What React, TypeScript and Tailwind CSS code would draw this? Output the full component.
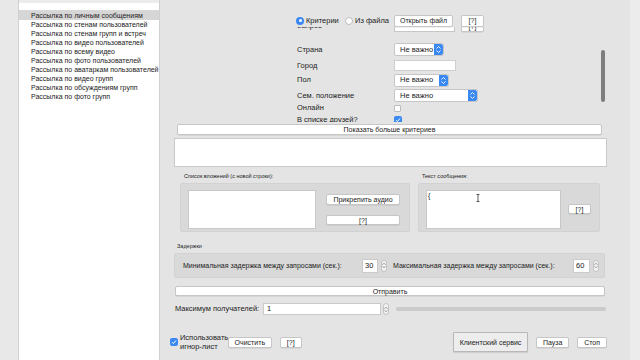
import React from "react";

function Btn({ children, className = "" }: { children?: React.ReactNode; className?: string }) {
  return (
    <div
      className={`flex items-center justify-center bg-white border border-[#c6c6c6] rounded-[2px] text-[7px] leading-none text-[#222] whitespace-nowrap shadow-[0_0.5px_0.5px_rgba(0,0,0,0.12)] ${className}`}
    >
      {children}
    </div>
  );
}

function Select({ className = "" }: { className?: string }) {
  return (
    <div className={`flex items-stretch bg-white border border-[#c6c6c6] rounded-[2px] h-[13px] ${className}`}>
      <div className="flex-1 flex items-center pl-[5px] text-[7.5px] leading-none text-[#222] whitespace-nowrap overflow-hidden">Не важно</div>
      <div className="w-[9px] shrink-0 bg-[#3a89f3] rounded-r-[2px] flex flex-col items-center justify-center gap-[1px]">
        <svg width="5" height="3" viewBox="0 0 5 3"><path d="M0.5 2.5 L2.5 0.5 L4.5 2.5" stroke="white" strokeWidth="0.9" fill="none" /></svg>
        <svg width="5" height="3" viewBox="0 0 5 3"><path d="M0.5 0.5 L2.5 2.5 L4.5 0.5" stroke="white" strokeWidth="0.9" fill="none" /></svg>
      </div>
    </div>
  );
}

function Stepper() {
  return (
    <div className="w-[6px] h-[12px] border border-[#c2c2c2] rounded-[3px] bg-[#f4f4f4] flex flex-col items-center justify-center gap-[1px]">
      <svg width="4" height="2" viewBox="0 0 4 2"><path d="M0.3 1.8 L2 0.3 L3.7 1.8" stroke="#777" strokeWidth="0.7" fill="none" /></svg>
      <svg width="4" height="2" viewBox="0 0 4 2"><path d="M0.3 0.2 L2 1.7 L3.7 0.2" stroke="#777" strokeWidth="0.7" fill="none" /></svg>
    </div>
  );
}

function CheckBlue({ className = "" }: { className?: string }) {
  return (
    <div className={`w-[8px] h-[8px] rounded-[2px] bg-[#3a89f3] flex items-center justify-center ${className}`}>
      <svg width="6" height="6" viewBox="0 0 6 6"><path d="M1 3.2 L2.4 4.6 L5 1.4" stroke="white" strokeWidth="1" fill="none" /></svg>
    </div>
  );
}

const items = [
  "Рассылка по личным сообщениям",
  "Рассылка по стенам пользователей",
  "Рассылка по стенам групп и встреч",
  "Рассылка по видео пользователей",
  "Рассылка по всему видео",
  "Рассылка по фото пользователей",
  "Рассылка по аватаркам пользователей",
  "Рассылка по видео групп",
  "Рассылка по обсуждениям групп",
  "Рассылка по фото групп",
];

export default function App() {
  return (
    <div className="w-[640px] h-[360px] flex overflow-hidden bg-[#e4e4e4] font-['Liberation_Sans',Arial,sans-serif] text-[#222]">
      {/* Left list */}
      <div className="w-[160px] h-full flex pl-[18px] pr-[3px] bg-[#e8e8e8]">
        <div className="flex-1 bg-white border-x border-[#d0d0d0] flex flex-col">
          <div className="h-[11px] border-b border-[#d8d8d8] border-t-[3px] border-t-[#ececec] bg-white" />
          <div className="flex flex-col">
            {items.map((t, i) => (
              <div
                key={t}
                className={`h-[9px] flex items-center pl-[12px] text-[7px] leading-none whitespace-nowrap ${i === 0 ? "bg-[#d6d6d6]" : ""}`}
              >
                {t}
              </div>
            ))}
          </div>
        </div>
      </div>

      {/* Main */}
      <div className="w-[470px] h-full flex flex-col pl-[14px] pr-[23px]">
        {/* radio row */}
        <div className="relative z-10 mt-[14px] h-[13px] flex items-center ml-[122px]">
          <div className="w-[49px] flex items-center gap-[2px]">
            <div className="w-[8px] h-[8px] rounded-full bg-[#3a89f3] flex items-center justify-center">
              <div className="w-[3px] h-[3px] rounded-full bg-white" />
            </div>
            <span className="text-[7.5px] leading-none">Критерии</span>
          </div>
          <div className="w-[49px] flex items-center gap-[2px]">
            <div className="w-[8px] h-[8px] rounded-full bg-white border border-[#bdbdbd]" />
            <span className="text-[7.5px] leading-none">Из файла</span>
          </div>
          <Btn className="w-[59px] h-[12px]">Открыть файл</Btn>
          <Btn className="w-[23px] h-[12px] ml-[8px]">[?]</Btn>
        </div>

        {/* scroll view */}
        <div className="relative h-[95px] overflow-hidden">
          <div className="flex flex-col mt-[-7px] ml-[123px]">
            <div className="h-[12px] flex items-center">
              <span className="w-[97px] text-[7.5px] leading-none">Запрос</span>
              <div className="w-[61px] h-[12px] bg-white border border-[#c6c6c6]" />
              <Btn className="w-[23px] h-[12px] ml-[6px]">[?]</Btn>
            </div>
            <div className="mt-[11px] h-[13px] flex items-center">
              <span className="w-[97px] text-[7.5px] leading-none">Страна</span>
              <Select className="w-[50px]" />
            </div>
            <div className="mt-[4px] h-[11px] flex items-center">
              <span className="w-[97px] text-[7.5px] leading-none">Город</span>
              <div className="w-[62px] h-[11px] bg-white border border-[#cfcfcf]" />
            </div>
            <div className="mt-[3px] h-[12px] flex items-center">
              <span className="w-[97px] text-[7.5px] leading-none">Пол</span>
              <Select className="w-[55px] h-[12px]" />
            </div>
            <div className="mt-[3px] h-[13px] flex items-center">
              <span className="w-[97px] text-[7.5px] leading-none">Сем. положение</span>
              <Select className="w-[84px]" />
            </div>
            <div className="mt-[2px] h-[8px] flex items-center">
              <span className="w-[97px] text-[7.5px] leading-none">Онлайн</span>
              <div className="w-[7px] h-[7px] bg-white border border-[#bcbcbc] rounded-[1px]" />
            </div>
            <div className="mt-[4px] h-[8px] flex items-center">
              <span className="w-[97px] text-[7.5px] leading-none">В списке друзей?</span>
              <CheckBlue />
            </div>
          </div>
          <div className="absolute right-[2px] top-[23px] w-[4px] h-[52px] rounded-full bg-[#7e7e7e]" />
        </div>

        {/* show more */}
        <Btn className="mt-[2px] ml-[3px] mr-[5px] h-[11px]">Показать больше критериев</Btn>

        {/* white box */}
        <div className="mt-[3px] h-[29px] bg-white border border-[#cacaca]" />

        {/* groups */}
        <div className="mt-[6px] flex">
          <div className="ml-[6px] w-[230px] flex flex-col">
            <div className="h-[8px] pl-[4px] flex items-center text-[5.5px] leading-none">Список вложений (с новой строки):</div>
            <div className="mt-[2px] h-[49px] bg-[#d9d9d9] border border-[#d2d2d2] rounded-[2px] flex pl-[7px] pt-[6px]">
              <div className="w-[128px] h-[39px] bg-white border border-[#c8c8c8]" />
              <div className="ml-[10px] flex flex-col">
                <Btn className="mt-[4px] w-[74px] h-[11px]">Прикрепить аудио</Btn>
                <Btn className="mt-[10px] w-[74px] h-[10px]">[?]</Btn>
              </div>
            </div>
          </div>
          <div className="ml-[8px] w-[182px] flex flex-col">
            <div className="h-[8px] pl-[4px] flex items-center text-[5.5px] leading-none">Текст сообщения:</div>
            <div className="mt-[2px] h-[49px] bg-[#d9d9d9] border border-[#d2d2d2] rounded-[2px] flex pl-[7px] pt-[6px]">
              <div className="relative w-[135px] h-[39px] bg-white border border-[#c8c8c8]">
                <span className="absolute left-[1px] top-[1px] text-[7px] leading-none">{"{"}</span>
                <svg className="absolute left-[49px] top-[3px]" width="4" height="8" viewBox="0 0 4 8">
                  <path d="M0.5 0.5 H3.5 M2 0.5 V7.5 M0.5 7.5 H3.5" stroke="#333" strokeWidth="0.8" fill="none" />
                </svg>
              </div>
              <Btn className="ml-[7px] mt-[14px] w-[23px] h-[10px]">[?]</Btn>
            </div>
          </div>
        </div>

        {/* delays */}
        <div className="mt-[11px] h-[8px] pl-[3px] flex items-center text-[5.5px] leading-none">Задержки</div>
        <div className="mt-[2px] h-[25px] w-[431px] bg-[#d9d9d9] border border-[#d2d2d2] rounded-[2px] flex items-center pl-[8px]">
          <span className="w-[179px] text-[7px] leading-none whitespace-nowrap">Минимальная задержка между запросами (сек.):</span>
          <div className="w-[16px] h-[14px] bg-white border border-[#cacaca] flex items-center pl-[2px] text-[7.5px] leading-none">30</div>
          <div className="ml-[3px]"><Stepper /></div>
          <span className="ml-[6px] w-[180px] text-[7px] leading-none whitespace-nowrap">Максимальная задержка между запросами (сек.):</span>
          <div className="w-[17px] h-[14px] bg-white border border-[#cacaca] flex items-center pl-[2px] text-[7.5px] leading-none">60</div>
          <div className="ml-[3px]"><Stepper /></div>
        </div>

        {/* send */}
        <Btn className="mt-[8px] ml-[1px] w-[430px] h-[10px]">Отправить</Btn>

        {/* max recipients */}
        <div className="mt-[7px] h-[12px] flex items-center">
          <span className="ml-[1px] w-[88px] text-[7.5px] leading-none whitespace-nowrap">Максимум получателей:</span>
          <div className="w-[118px] h-[12px] bg-white border border-[#cacaca] flex items-center pl-[3px] text-[7.5px] leading-none">1</div>
          <div className="ml-[2px]"><Stepper /></div>
          <div className="ml-[7px] w-[210px] h-[4px] rounded-full bg-[#cbcbcb]" />
        </div>

        {/* bottom row */}
        <div className="mt-[17px] h-[20px] flex items-center ml-[-4px]">
          <CheckBlue />
          <div className="ml-[2px] w-[48px] flex flex-col text-[7.5px] leading-[9px]">
            <span>Использовать</span>
            <span>игнор-лист</span>
          </div>
          <Btn className="w-[44px] h-[11px]">Очистить</Btn>
          <Btn className="ml-[8px] w-[22px] h-[11px]">[?]</Btn>
          <div className="ml-[151px] w-[76px] h-[20px] bg-[#ededed] border border-[#b8b8b8] rounded-[1px] flex items-center justify-center text-[7px] leading-none shadow-[0_1px_1px_rgba(0,0,0,0.1)]">
            Клиентский сервис
          </div>
          <Btn className="ml-[8px] w-[33px] h-[11px]">Пауза</Btn>
          <Btn className="ml-[8px] w-[30px] h-[11px]">Стоп</Btn>
        </div>
      </div>

      {/* right strip */}
      <div className="w-[10px] h-full bg-[#ececec]" />
    </div>
  );
}
